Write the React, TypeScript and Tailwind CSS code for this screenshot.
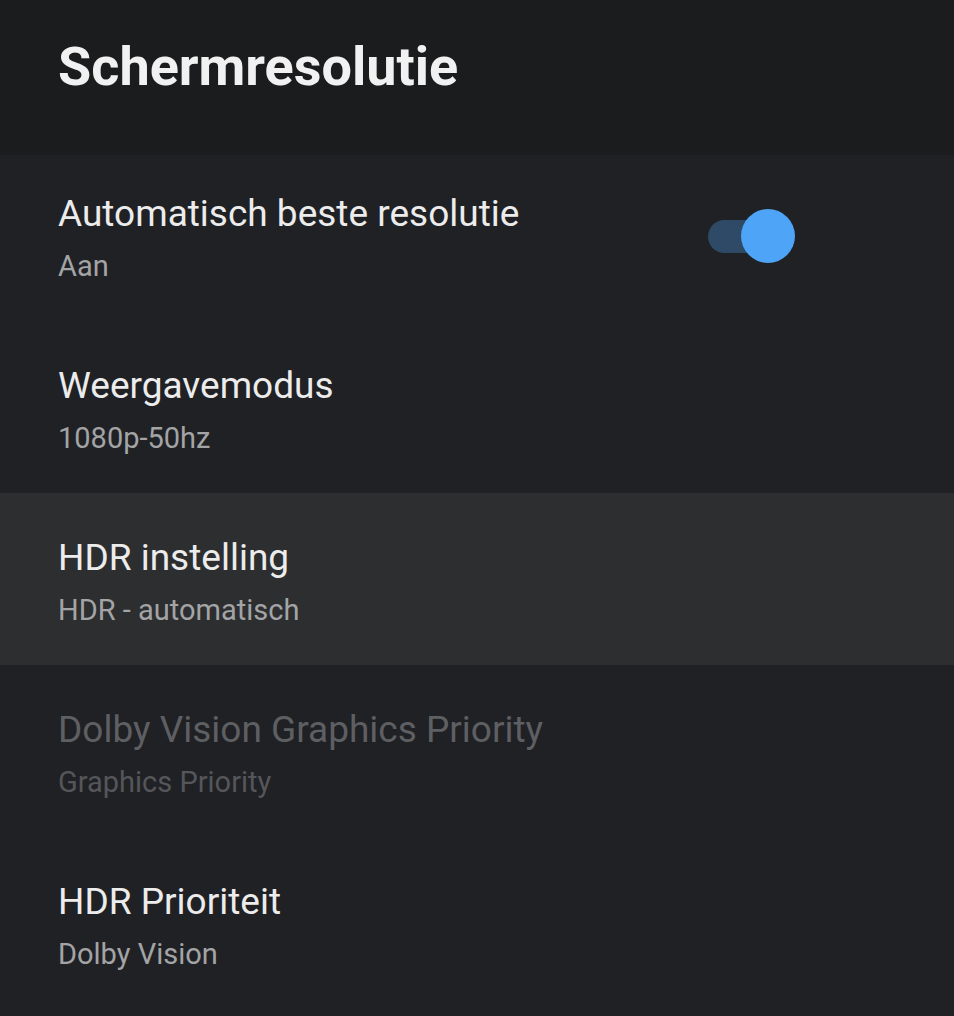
import React from "react";

const rows = [
  { title: "Automatisch beste resolutie", sub: "Aan", toggle: true },
  { title: "Weergavemodus", sub: "1080p-50hz" },
  { title: "HDR instelling", sub: "HDR - automatisch", active: true },
  { title: "Dolby Vision Graphics Priority", sub: "Graphics Priority", disabled: true },
  { title: "HDR Prioriteit", sub: "Dolby Vision" },
];

export default function App() {
  return (
    <div className="w-[954px] h-[1016px] overflow-hidden bg-[#202125]" style={{ fontFamily: "Roboto, 'Noto Sans', sans-serif" }}>
      <div className="h-[155px] bg-[#1b1c1e] pl-[58px] pt-[35px]">
        <h1 className="text-[54px] leading-[64px] font-bold text-[#f1f1f1]">Schermresolutie</h1>
      </div>
      <div className="flex flex-col">
        {rows.map((r, i) => (
          <div
            key={i}
            className={
              "relative flex items-start pl-[58px] " +
              (i === 0 ? "h-[166px] pt-[35px] " : "h-[172px] pt-[41px] ") +
              (r.active ? "bg-[#2d2e30]" : "")
            }
          >
            <div className="flex flex-col">
              <div className={"text-[37px] leading-[48px] " + (r.disabled ? "text-[#5e5f62]" : "text-[#ececec]")}>{r.title}</div>
              <div className={"text-[29px] leading-[40px] mt-[8px] " + (r.disabled ? "text-[#55565a]" : "text-[#a3a4a6]")}>{r.sub}</div>
            </div>
            {r.toggle && (
              <div className="absolute left-[708px] top-[53px] w-[88px] h-[56px] flex items-center">
                <div className="w-[66px] h-[33px] rounded-full bg-[#2f4a66]" />
                <div className="absolute left-[33px] top-[1px] w-[54px] h-[54px] rounded-full bg-[#4ea4f6]" />
              </div>
            )}
          </div>
        ))}
      </div>
    </div>
  );
}
